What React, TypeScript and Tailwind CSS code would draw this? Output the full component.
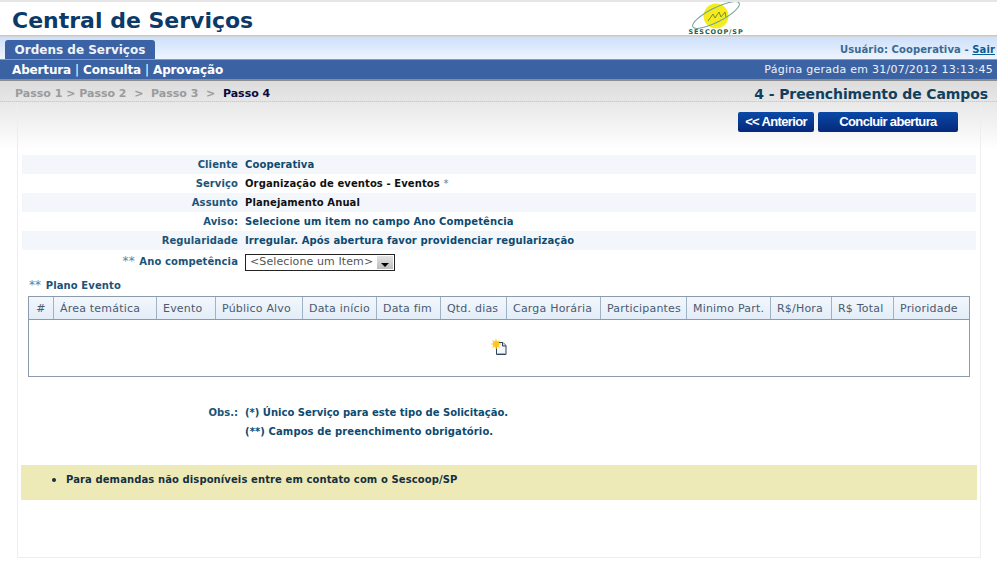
import React from "react";

const font = "font-['DejaVu_Sans','Liberation_Sans',sans-serif]";

const colunas = [
  { nome: "#", w: "w-[25px]" },
  { nome: "Área temática", w: "w-[103px]" },
  { nome: "Evento", w: "w-[59px]" },
  { nome: "Público Alvo", w: "w-[87px]" },
  { nome: "Data início", w: "w-[74px]" },
  { nome: "Data fim", w: "w-[64px]" },
  { nome: "Qtd. dias", w: "w-[66px]" },
  { nome: "Carga Horária", w: "w-[94px]" },
  { nome: "Participantes", w: "w-[86px]" },
  { nome: "Minimo Part.", w: "w-[84px]" },
  { nome: "R$/Hora", w: "w-[61px]" },
  { nome: "R$ Total", w: "w-[62px]" },
  { nome: "Prioridade", w: "flex-1" },
];

function Logo() {
  return (
    <div className="relative w-[60px] h-[33px]">
      <svg width="60" height="27" viewBox="0 0 60 27" className="block">
        <circle cx="30" cy="14" r="12.5" fill="#f4ec1e" />
        <ellipse cx="30" cy="13" rx="26" ry="7" transform="rotate(-27 30 13)" fill="none" stroke="#6fa39c" strokeWidth="1" />
        <path d="M22 19l5-7 2 4 4-6 2 5 4-5 1 5" fill="none" stroke="#7f8a2a" strokeWidth="1" />
      </svg>
      <div className="absolute left-0 top-[27px] w-[60px] text-center font-['DejaVu_Sans',sans-serif] text-[6.5px] leading-[6px] font-bold tracking-[0.9px] whitespace-nowrap text-[#22604a]">
        SESCOOP/SP
      </div>
    </div>
  );
}

function NovoIcon() {
  return (
    <svg width="17" height="17" viewBox="0 0 17 17" className="block">
      <path d="M5.500 3.500h6.500l3 3v9h-9.500z" fill="#f4f7fb" stroke="#2f435c" strokeWidth="1" />
      <path d="M11.500 3.500v3.500h3.500" fill="#c9d5e4" stroke="#2f435c" strokeWidth="1" />
      <path d="M6.500 14.500h7.500" stroke="#9db0c6" strokeWidth="1" />
      <path d="M5 0v10M0 5h10M1.500 1.500l7 7M8.500 1.500l-7 7" stroke="#ffd23c" strokeWidth="1.200" />
      <circle cx="5" cy="5" r="3.200" fill="#ffc61f" />
    </svg>
  );
}

function Linha({ label, children, par, cor = "text-[#0d4a70]" }: { label: React.ReactNode; children: React.ReactNode; par?: boolean; cor?: string }) {
  return (
    <div className={`flex h-[19px] items-center text-[10px] tracking-[0.1px] ${par ? "bg-[#f3f7fb]" : ""}`}>
      <div className="w-[216px] text-right font-bold text-[#1b5478]">{label}</div>
      <div className={`ml-[7px] font-bold ${cor}`}>{children}</div>
    </div>
  );
}

export default function App() {
  return (
    <div className={`${font} w-[997px] h-[578px] overflow-hidden bg-white text-[11px] leading-[14px]`}>
      <div className="h-[2px] bg-[#e6e6e6]" />
      <div className="flex h-[33px] items-start bg-white">
        <div className="ml-[12px] mt-[5px] w-[674px] text-[22px] leading-[28px] font-bold text-[#0b3a68]">Central de Serviços</div>
        <Logo />
      </div>
      <div className="h-[3px] bg-gradient-to-b from-[#c4c4c4] to-[#e3e3e3]" />
      <div className="flex h-[21px] items-end justify-between bg-gradient-to-b from-[#cfe1fb] to-[#eef4fd] pl-[5px] pr-[2px]">
        <div className="flex h-[19px] w-[150px] items-center justify-center rounded-t-[3px] bg-[#3b62a4] text-[12px] font-bold text-[#eef3fa]">
          Ordens de Serviços
        </div>
        <div className="mb-[2px] text-[10px] tracking-[0.1px] font-bold text-[#3a6a94]">
          Usuário: Cooperativa - <a className="text-[#0b5c94] underline">Sair</a>
        </div>
      </div>
      <div className="flex h-[20px] items-center justify-between border-t border-[#7f9cc4] bg-[#3b62a3] pl-[12px] pr-[4px] text-white">
        <div className="text-[12px] tracking-[-0.15px] font-bold">
          Abertura <span className="font-normal">|</span> Consulta <span className="font-normal">|</span> Aprovação
        </div>
        <div className="tracking-[0.25px] text-[#edf2f9]">Página gerada em 31/07/2012 13:13:45</div>
      </div>
      <div className="h-[2px] bg-[#8e8e8e]" />
      <div className="flex h-[21px] items-center justify-between border-b border-dotted border-[#c9c9c9] bg-gradient-to-b from-[#dcdcdc] to-[#e6e6e6] pl-[15px] pr-[9px] pt-[6px]">
        <div className="font-bold text-[#9b9b9b]">
          Passo 1 &gt; Passo 2 &nbsp;&gt; &nbsp;Passo 3 &nbsp;&gt; &nbsp;<span className="text-[#0a0a3c]">Passo 4</span>
        </div>
        <div className="text-[14px] tracking-[-0.1px] font-bold text-[#113f5f]">4 - Preenchimento de Campos</div>
      </div>
      <div className="h-[48px] bg-gradient-to-b from-[#e8e8e8] to-white" />
      <div className="-mt-[48px] mx-[17px] h-[456px] w-[964px] border-x border-b border-[#eeeeee]">
        <div className="flex h-[27px] justify-end gap-[4px] pr-[22px] pt-[10px] box-content">
          <div className="flex h-[20px] w-[76px] items-center justify-center rounded-[2px] bg-gradient-to-b from-[#0a4aa6] to-[#06287c] font-['Liberation_Sans',sans-serif] text-[13px] font-bold tracking-[-0.65px] text-white">
            &lt;&lt; Anterior
          </div>
          <div className="flex h-[20px] w-[140px] items-center justify-center rounded-[2px] bg-gradient-to-b from-[#0a4aa6] to-[#06287c] font-['Liberation_Sans',sans-serif] text-[13px] font-bold tracking-[-0.65px] text-white">
            Concluir abertura
          </div>
        </div>
        <div className="mt-[16px] px-[4px]">
          <Linha label="Cliente" par>Cooperativa</Linha>
          <Linha label="Serviço" cor="text-[#111111]">Organização de eventos - Eventos <span className="font-normal text-[#5f7f96]">*</span></Linha>
          <Linha label="Assunto" par cor="text-[#111111]">Planejamento Anual</Linha>
          <Linha label="Aviso:">Selecione um item no campo Ano Competência</Linha>
          <Linha label="Regularidade" par>Irregular. Após abertura favor providenciar regularização</Linha>
          <div className="mt-[3px] flex h-[18px] items-center text-[10px] tracking-[0.1px]">
            <div className="w-[216px] text-right font-bold text-[#1b5478]">
              <span className="mr-px text-[12px] leading-[12px] font-normal text-[#5f7f96]">**</span> Ano competência
            </div>
            <div className="ml-[7px] flex h-[17px] w-[150px] items-center justify-between border border-[#222222] pl-[4px] pr-px text-[11px] tracking-[0.1px] text-[#555555]">
              &lt;Selecione um Item&gt;
              <span className="flex h-[13px] w-[16px] items-end justify-center bg-gradient-to-b from-[#e4e4e4] to-[#bcbcbc] pb-[2px]">
                <span className="h-0 w-0 border-x-[4px] border-t-[4px] border-x-transparent border-t-black" />
              </span>
            </div>
          </div>
        </div>
        <div className="ml-[11px] mt-[8px] h-[14px] text-[10px] tracking-[0.1px] font-bold text-[#1b5478]">
          <span className="mr-px text-[12px] leading-[12px] font-normal text-[#5f7f96]">**</span> Plano Evento
        </div>
        <div className="ml-[10px] mt-[3px] h-[81px] w-[942px] border border-[#8b9bac]">
          <div className="flex h-[23px] border-b border-[#8b9bac] bg-gradient-to-b from-[#f3f7fc] to-[#e3edf8] tracking-[0.2px] text-[#4a5a70]">
            {colunas.map((c, i) => (
              <div key={c.nome} className={`${c.w} flex items-center whitespace-nowrap pt-px ${i === 0 ? "justify-center" : "pl-[6px]"} ${i < colunas.length - 1 ? "border-r border-[#9fb2c6]" : ""}`}>
                {c.nome}
              </div>
            ))}
          </div>
          <div className="flex h-[56px] items-center justify-center pb-[2px]">
            <NovoIcon />
          </div>
        </div>
        <div className="mt-[26px] flex h-[19px] items-center text-[10px] font-bold text-[#0d4a70]">
          <div className="w-[220px] text-right text-[#1b5478]">Obs.:</div>
          <div className="ml-[7px]">(*) Único Serviço para este tipo de Solicitação.</div>
        </div>
        <div className="flex h-[19px] items-center text-[10px] tracking-[0.1px] font-bold text-[#0d4a70]">
          <div className="ml-[227px]">(**) Campos de preenchimento obrigatório.</div>
        </div>
        <div className="ml-[3px] mt-[24px] h-[35px] w-[956px] bg-[#eeeab8] pl-[31px] pt-[8px] text-[10px] tracking-[0.1px] font-bold text-[#14303f]">
          <div className="flex items-center">
            <span className="mr-[10px] h-[4px] w-[4px] rounded-full bg-[#14303f]" />
            Para demandas não disponíveis entre em contato com o Sescoop/SP
          </div>
        </div>
      </div>
    </div>
  );
}
